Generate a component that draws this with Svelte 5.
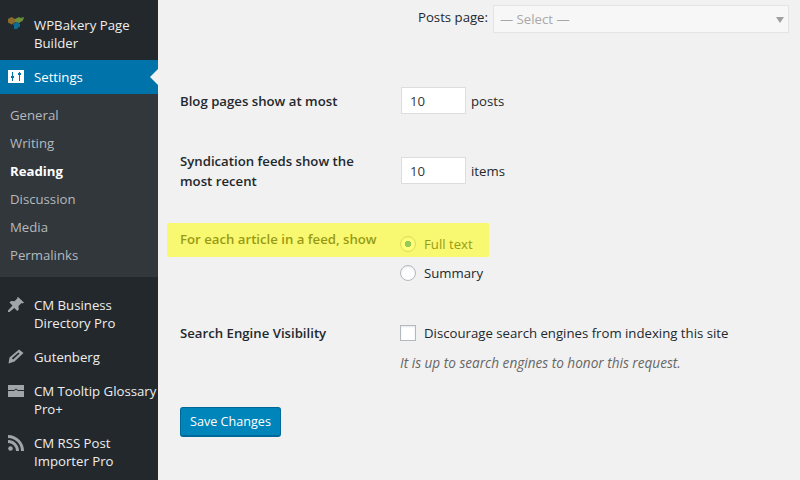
<script lang="ts">
  // Reading settings screen: admin sidebar on the left, settings form on the right.
  const submenu = [
    { label: 'General' },
    { label: 'Writing' },
    { label: 'Reading', current: true },
    { label: 'Discussion' },
    { label: 'Media' },
    { label: 'Permalinks' },
  ]
</script>

<div class="page">
  <aside class="sidebar">
    <div class="item">
      <svg class="icon" viewBox="0 0 16 16">
        <path fill="#8a6a2a" d="M0 2l3.500-2L7 2v3.500L3.500 7.500 0 5.500z" />
        <path fill="#6d8d3a" d="M7 2l4-2 1.500 1L16 0l-1 3.500L11 6 7 5z" />
        <path fill="#0e6c93" d="M5 7l3.500-2L12 7v2.500L9.500 11v1H6V9z" />
      </svg>
      <span>WPBakery Page Builder</span>
    </div>
    <div class="item active">
      <svg class="icon" viewBox="0 0 16 16">
        <path
          fill="#fff"
          d="M0 1h16v13H0zM4 3v4H3v2h1v3h1V9h1V7H5V3zM11 3v1h-1v2h1v6h1V6h1V4h-1V3z"
          fill-rule="evenodd"
        />
      </svg>
      <span>Settings</span>
      <i class="pointer"></i>
    </div>
    <ul class="submenu">
      {#each submenu as s (s.label)}
        <li class:current={s.current}>{s.label}</li>
      {/each}
    </ul>
    <div class="item first">
      <svg class="icon" viewBox="0 0 16 16">
        <path fill="#a0a5aa" d="M10 0l6 5.500-1.500 1-1-.5-3 3 .3 3.500-1.500 1.500-3-3L1.500 15H0v-1.500l4.500-5-3-3L3 4l3.500.3 3-3-.5-.5z" />
      </svg>
      <span>CM Business Directory Pro</span>
    </div>
    <div class="item">
      <svg class="icon" viewBox="0 0 16 16">
        <path fill="#a0a5aa" d="M11 .5L15.500 4 6.500 12.500 0.500 14.500 1.500 8.500zM3.800 9.200l1.300 1.200L11.600 4.600 10.400 3.500z" fill-rule="evenodd" />
      </svg>
      <span>Gutenberg</span>
    </div>
    <div class="item">
      <svg class="icon" viewBox="0 0 16 16">
        <path fill="#a0a5aa" d="M0 2h16v5h-6L8 5.500 6 7H0zM0 8h6l2-1.500L10 8h6v6H0z" />
      </svg>
      <span>CM Tooltip Glossary Pro+</span>
    </div>
    <div class="item">
      <svg class="icon" viewBox="0 0 16 16">
        <circle cx="2.500" cy="13.500" r="2.300" fill="#a0a5aa" />
        <path fill="none" stroke="#a0a5aa" stroke-width="3" d="M0 6.500a9.500 9.500 0 0 1 9.500 9.500M0 1.500a14.500 14.500 0 0 1 14.500 14.500" />
      </svg>
      <span>CM RSS Post Importer Pro</span>
    </div>
  </aside>

  <main class="main">
    <div class="posts-page">
      <span>Posts page:</span>
      <div class="select">
        <span>— Select —</span>
        <i class="caret"></i>
      </div>
    </div>

    <div class="row blog">
      <div class="label pad">Blog pages show at most</div>
      <div class="field inline">
        <input class="num" type="text" value="10" />
        <span>posts</span>
      </div>
    </div>

    <div class="row feeds">
      <div class="label">Syndication feeds show the most recent</div>
      <div class="field inline down">
        <input class="num" type="text" value="10" />
        <span>items</span>
      </div>
    </div>

    <div class="row article">
      <div class="label">For each article in a feed, show</div>
      <div class="field radios">
        <label class="check"><input type="radio" name="feed" checked /> Full text</label>
        <label class="check"><input type="radio" name="feed" /> Summary</label>
      </div>
      <div class="highlight"></div>
    </div>

    <div class="row search">
      <div class="label">Search Engine Visibility</div>
      <div class="field boxed">
        <label class="check"><input type="checkbox" /> Discourage search engines from indexing this site</label>
        <p class="note">It is up to search engines to honor this request.</p>
      </div>
    </div>

    <button class="save">Save Changes</button>
  </main>
</div>

<style>
  :global(body) {
    margin: 0;
    background: #f1f1f1;
  }
  .page {
    display: flex;
    width: 800px;
    height: 480px;
    overflow: hidden;
    background: #f1f1f1;
    color: #23282d;
    font-family: "Open Sans", "Noto Sans", sans-serif;
    font-size: 13.2px;
    line-height: 20px;
  }
  .sidebar {
    flex: 0 0 158px;
    padding-top: 8px;
    background: #23282d;
    color: #eee;
    line-height: 18px;
    box-sizing: border-box;
  }
  .item {
    position: relative;
    display: flex;
    padding: 8px 0 8px 34px;
  }
  .item.first {
    margin-top: 11px;
  }
  .item.active {
    background: #0073aa;
    color: #fff;
  }
  .icon {
    position: absolute;
    left: 8px;
    top: 9px;
    width: 16px;
    height: 16px;
  }
  .pointer {
    position: absolute;
    right: 0;
    top: 9px;
    border: 8px solid transparent;
    border-right-color: #f1f1f1;
    border-left-width: 0;
  }
  .submenu {
    margin: 0;
    padding: 7px 0 8px;
    list-style: none;
    background: #32373c;
    color: #b4b9be;
  }
  .submenu li {
    padding: 0 10px;
    height: 28px;
    line-height: 28px;
  }
  .submenu li.current {
    color: #fff;
    font-weight: 700;
  }
  .main {
    flex: 1;
    padding: 5px 0 0 22px;
    min-width: 0;
  }
  .posts-page {
    display: flex;
    justify-content: flex-end;
    align-items: flex-start;
    gap: 5px;
    padding-right: 11px;
    line-height: 24px;
  }
  .select {
    position: relative;
    box-sizing: border-box;
    width: 296px;
    height: 28px;
    padding-left: 6px;
    line-height: 27px;
    border: 1px solid #e4e4e4;
    background: #f7f7f7;
    color: #a8a8a8;
  }
  .caret {
    position: absolute;
    right: 4px;
    top: 11px;
    border: 4px solid transparent;
    border-top: 6px solid #a0a0a0;
    border-bottom: 0;
  }
  .row {
    position: relative;
    display: flex;
  }
  .label {
    flex: 0 0 200px;
    margin-right: 21px;
    font-weight: 600;
  }
  .pad {
    padding-top: 4px;
  }
  .blog {
    margin-top: 54px;
  }
  .feeds {
    margin-top: 37px;
  }
  .article {
    margin-top: 38px;
  }
  .search {
    margin-top: 40px;
  }
  .inline {
    display: flex;
    align-items: center;
    gap: 5px;
    align-self: flex-start;
  }
  .down {
    margin-top: 6px;
  }
  .num {
    box-sizing: border-box;
    width: 65px;
    height: 27px;
    padding: 0 8px;
    margin: 0;
    border: 1px solid #ddd;
    background: #fff;
    color: #32373c;
    font: inherit;
    outline: none;
  }
  .radios {
    display: flex;
    flex-direction: column;
    gap: 9px;
    margin: 5px 0 0 -1px;
  }
  .boxed {
    margin-left: -1px;
  }
  .check {
    display: flex;
    align-items: center;
    gap: 8px;
    height: 20px;
  }
  .check input {
    appearance: none;
    box-sizing: border-box;
    width: 16px;
    height: 16px;
    margin: 0;
    border: 1px solid #b4b9be;
    background: #fff;
    box-shadow: inset 0 1px 2px rgba(0, 0, 0, 0.1);
  }
  .check input[type="radio"] {
    border-radius: 50%;
  }
  .check input[type="radio"]:checked {
    background: radial-gradient(circle, #1e8cbe 0 3px, #fff 3.500px);
  }
  .note {
    margin: 10px 0 0;
    font-style: italic;
    font-size: 13.6px;
    color: #666;
  }
  .highlight {
    position: absolute;
    left: -13px;
    top: -6px;
    width: 322px;
    height: 34px;
    background: rgba(255, 255, 0, 0.53);
  }
  .save {
    display: block;
    box-sizing: border-box;
    width: 101px;
    height: 30px;
    margin-top: 34px;
    padding: 1px 0 0;
    border: 1px solid #006799;
    border-bottom-width: 2px;
    border-radius: 3px;
    background: #0085ba;
    color: #fff;
    font: inherit;
    font-size: 12.6px;
  }
</style>
